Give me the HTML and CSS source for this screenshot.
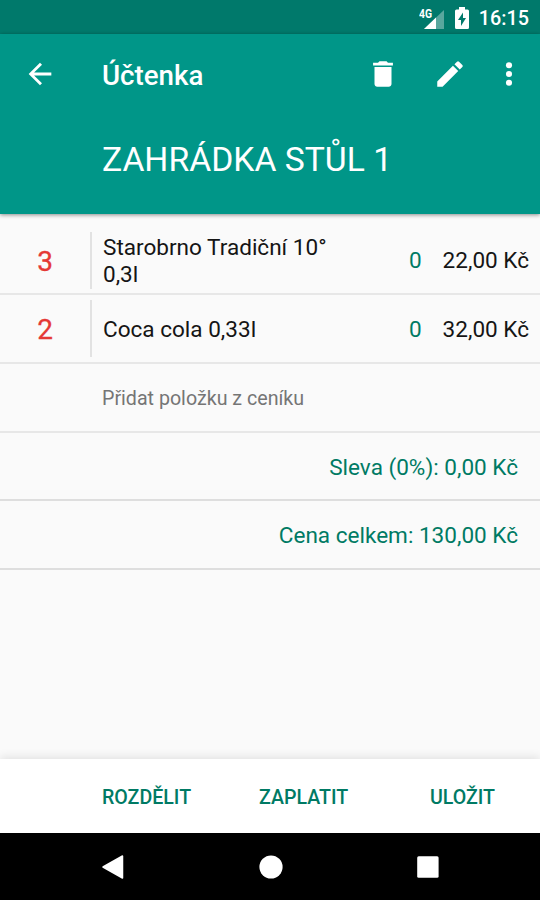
FILE: index.html
```html
<!DOCTYPE html>
<html lang="cs">
<head>
<meta charset="utf-8">
<title>Účtenka</title>
<link rel="stylesheet" href="styles.css">
</head>
<body>
<div class="status">
  <svg class="signal" width="26" height="24" viewBox="0 0 26 24">
    <path d="M25 4v19H5z" fill="#fff" fill-opacity=".35"/>
    <path d="M17 11.500v11.500H5z" fill="#fff"/>
    <text class="net" x="0" y="12" textLength="13" lengthAdjust="spacingAndGlyphs">4G</text>
  </svg>
  <svg class="battery" width="14" height="22" viewBox="0 0 14 22">
    <path d="M4 0h6v2.500h2.500A1.500 1.500 0 0 1 14 4v16.500a1.500 1.500 0 0 1-1.500 1.500h-11A1.500 1.500 0 0 1 0 20.500V4a1.500 1.500 0 0 1 1.500-1.500H4z" fill="#fff"/>
    <path d="M8 5.500v5.500h3L6 19v-6H3z" fill="#00796b"/>
  </svg>
  <span class="clock">16:15</span>
</div>
<header class="appbar">
  <div class="toolbar">
    <svg class="back" width="34" height="34" viewBox="0 0 24 24"><path d="M20 11H7.830l5.590-5.590L12 4l-8 8 8 8 1.410-1.410L7.830 13H20v-2z"/></svg>
    <h1 class="title">Účtenka</h1>
    <svg class="trash" width="34" height="34" viewBox="0 0 24 24"><path d="M6 19c0 1.100.9 2 2 2h8c1.100 0 2-.9 2-2V7H6v12zM19 4h-3.500l-1-1h-5l-1 1H5v2h14V4z"/></svg>
    <svg class="edit" width="34" height="34" viewBox="0 0 24 24"><path d="M3 17.250V21h3.750L17.810 9.940l-3.750-3.750L3 17.250zM20.710 7.040a1 1 0 0 0 0-1.410l-2.340-2.340a1 1 0 0 0-1.410 0l-1.830 1.830 3.750 3.750 1.830-1.830z"/></svg>
    <svg class="more" width="34" height="34" viewBox="0 0 24 24"><circle cx="12" cy="5.800" r="2.150"/><circle cx="12" cy="12" r="2.150"/><circle cx="12" cy="18.200" r="2.150"/></svg>
  </div>
  <div class="table-name"><span>ZAHRÁDKA STŮL 1</span></div>
</header>
<main class="content">
  <div class="row item first">
    <span class="qty">3</span>
    <span class="name">Starobrno Tradiční 10° 0,3l</span>
    <span class="zero">0</span>
    <span class="price">22,00 Kč</span>
  </div>
  <div class="row item">
    <span class="qty">2</span>
    <span class="name">Coca cola 0,33l</span>
    <span class="zero">0</span>
    <span class="price">32,00 Kč</span>
  </div>
  <div class="row add"><span>Přidat položku z ceníku</span></div>
  <div class="row sum discount"><span>Sleva (0%): 0,00 Kč</span></div>
  <div class="row sum"><span>Cena celkem: 130,00 Kč</span></div>
</main>
<footer class="actions">
  <span class="split">ROZDĚLIT</span>
  <span class="pay">ZAPLATIT</span>
  <span class="save">ULOŽIT</span>
</footer>
<nav class="nav">
  <svg width="24" height="26" viewBox="0 0 24 26"><path d="M2 13 21.500 2v22z" stroke="#fff" stroke-width="1.500" stroke-linejoin="round"/></svg>
  <svg width="24" height="26" viewBox="0 0 24 26"><circle cx="12" cy="13" r="11.600"/></svg>
  <svg width="24" height="26" viewBox="0 0 24 26"><rect x="1.200" y="2.200" width="21.400" height="21.600" rx="1.500"/></svg>
</nav>
</body>
</html>
```
FILE: styles.css
```css
* { box-sizing: border-box; }
body {
  margin: 0;
  width: 540px;
  height: 900px;
  display: flex;
  flex-direction: column;
  overflow: hidden;
  background: #fafafa;
  font-family: Roboto, sans-serif;
  color: #151515;
  white-space: nowrap;
}
svg { display: block; flex: none; fill: #fff; }
.status {
  height: 34px;
  flex: none;
  display: flex;
  justify-content: flex-end;
  align-items: center;
  padding: 2px 11px 0 0;
  background: #00796b;
  color: #fff;
}
.signal { margin: 0 10px 0 0; }
.net { font: 700 12px Roboto, sans-serif; }
.battery { margin-right: 10px; }
.clock { font-size: 19.800px; font-weight: 500; line-height: 34px; padding-top: 2px; }
.appbar {
  height: 180px;
  flex: none;
  background: #009688;
  color: #fff;
  box-shadow: 0 1px 4px rgba(0, 0, 0, .45);
  position: relative;
}
.toolbar { height: 80px; display: flex; align-items: center; padding-left: 23px; }
.title { margin: 4px 0 0 45px; width: 264px; font-size: 27.700px; font-weight: 500; line-height: 36px; }
.edit { margin-left: 33px; }
.more { margin-left: 25px; }
.table-name { height: 90px; display: flex; align-items: center; padding-left: 102px; font-size: 33.700px; }
.content { flex: 1; }
.row { height: 69px; display: flex; align-items: center; border-bottom: 2px solid #e7e7e7; font-size: 22.550px; }
.first { height: 81px; padding-top: 13px; }
.qty {
  width: 92px;
  height: 57px;
  line-height: 59px;
  border-right: 2px solid #e2e2e2;
  text-align: center;
  font-size: 28px;
  -webkit-text-stroke: .3px #e53935;
  color: #e53935;
}
.name { width: 250px; margin-left: 11px; padding: 2px 20px 0 0; line-height: 27px; white-space: normal; }
.zero { width: 24px; margin-left: 56px; padding-top: 1px; color: #007a64; }
.price { margin-left: auto; padding: 1px 11px 0 0; }
.add { height: 69px; padding: 1px 0 0 102px; font-size: 19.650px; color: #757575; }
.sum { justify-content: flex-end; padding: 2px 22px 0 0; color: #007a64; border-color: #dedede; }
.discount { height: 68px; }
.actions {
  height: 74px;
  flex: none;
  display: flex;
  align-items: center;
  background: #fff;
  color: #007a64;
  font-size: 19.600px;
  font-weight: 500;
  box-shadow: 0 -2px 9px rgba(0, 0, 0, .1);
  padding: 2px 45px 0 102px;
}
.pay { margin-left: 68px; }
.save { margin-left: auto; }
.nav {
  height: 67px;
  flex: none;
  display: flex;
  justify-content: space-between;
  align-items: center;
  padding: 0 100px 0 101px;
  background: #000;
}
```
